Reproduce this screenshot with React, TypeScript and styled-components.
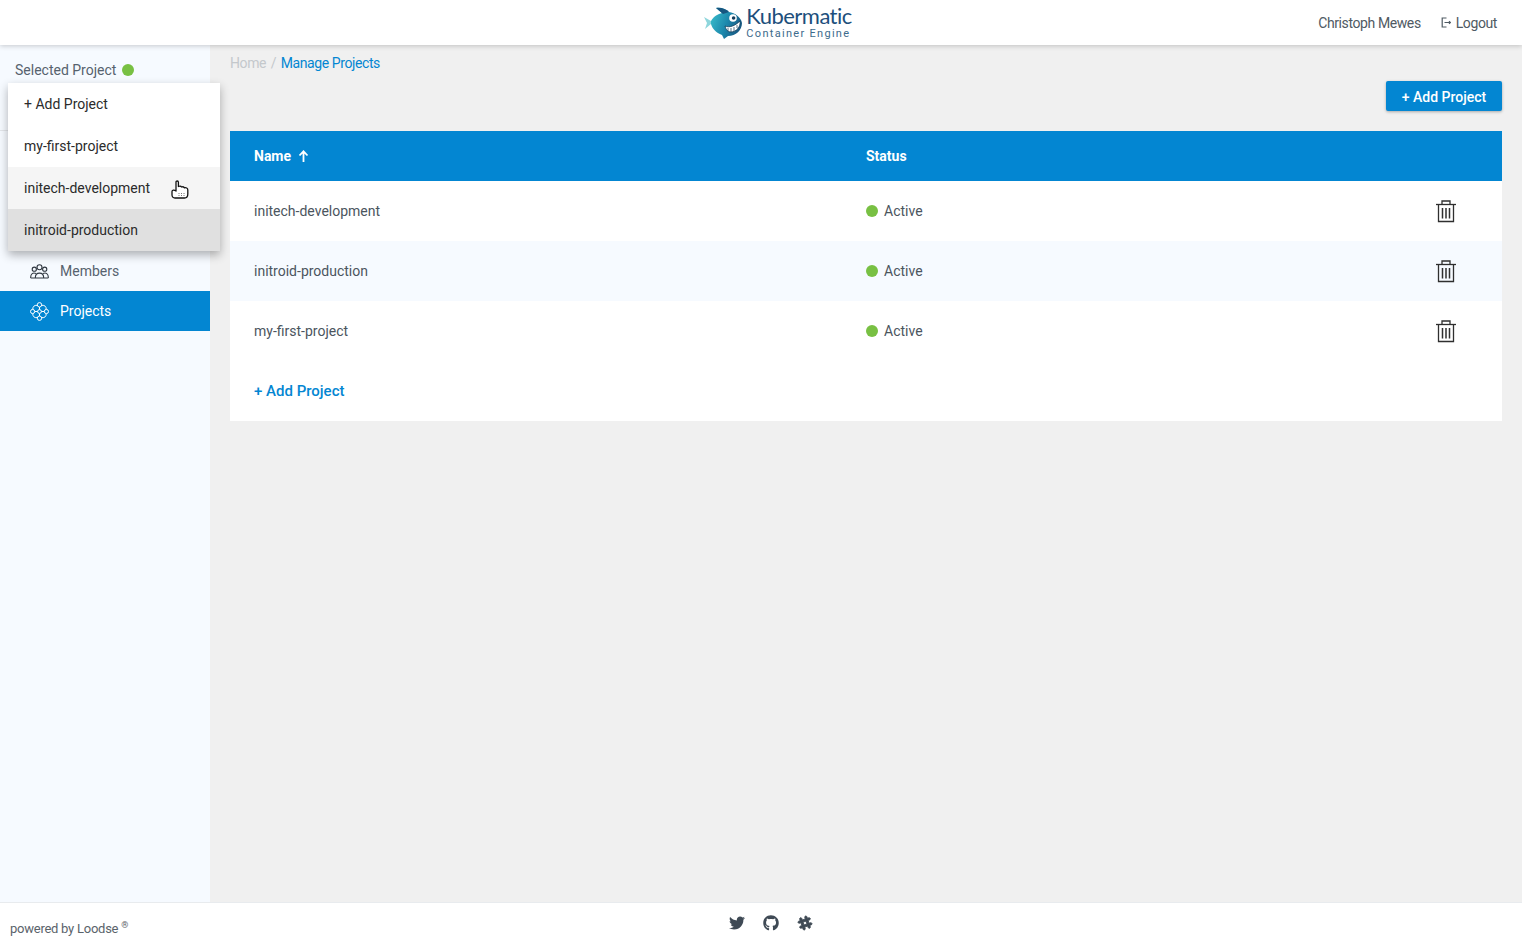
import React from "react";
import styled, { createGlobalStyle } from "styled-components";
import { FaTwitter, FaGithub, FaSlackHash } from "react-icons/fa";

const GlobalStyle = createGlobalStyle`
    html, body {
        margin: 0;
        padding: 0;
        height: 100%;
        background: #f0f0f0;
        font-family: Roboto, "Liberation Sans", sans-serif;
        font-size: 14px;
        color: #3c4650;
    }
`;

const Page = styled.div`
    display: flex;
    flex-direction: column;
    height: 943px;
    overflow: hidden;
`;
const Header = styled.header`
    position: relative;
    z-index: 2;
    flex: 0 0 45px;
    display: grid;
    grid-template-columns: 1fr auto 1fr;
    align-items: start;
    background: #fff;
    box-shadow: 0 1px 5px rgba(0, 0, 0, 0.2);
`;
const Logo = styled.div`
    grid-column: 2;
    display: flex;
    align-items: flex-start;
    gap: 4px;
    margin-left: 34px;
    padding-top: 5px;
`;
const LogoText = styled.div`
    display: flex;
    flex-direction: column;
`;
const LogoTitle = styled.span`
    font-family: Lato, Roboto, sans-serif;
    font-size: 22px;
    line-height: 21px;
    letter-spacing: -0.55px;
    color: #1d4f7c;
`;
const LogoSub = styled.span`
    font-size: 11px;
    line-height: 13px;
    letter-spacing: 1.3px;
    color: #3d6b8c;
    margin-top: 1px;
`;
const UserArea = styled.div`
    grid-column: 3;
    display: flex;
    justify-content: flex-end;
    align-items: center;
    gap: 20px;
    height: 45px;
    padding-right: 25px;
    color: #4f5a63;
    letter-spacing: -0.4px;
`;
const Logout = styled.span`
    display: flex;
    align-items: center;
    gap: 5px;
`;
const Body = styled.div`
    flex: 1;
    display: flex;
    min-height: 0;
`;
const Sidebar = styled.aside`
    position: relative;
    flex: 0 0 210px;
    display: flex;
    flex-direction: column;
    background: #f6faff;
`;
const ProjectSelect = styled.div`
    border-bottom: 1px solid #e3e6ea;
    padding: 17px 15px 0;
    box-sizing: border-box;
    height: 86px;
    display: flex;
    align-items: flex-start;
    gap: 6px;
    line-height: 16px;
    color: #56626e;
`;
const StatusDot = styled.span`
    display: inline-block;
    width: 12px;
    height: 12px;
    border-radius: 50%;
    background: #78c043;
    flex: none;
`;
const SelectDot = styled(StatusDot)`
    margin-top: 2px;
`;
const NavSpacer = styled.div`
    height: 120px;
`;
const NavItem = styled.div<{ $active?: boolean }>`
    height: 40px;
    display: flex;
    align-items: center;
    gap: 11px;
    padding-left: 30px;
    background: ${props => (props.$active ? "#0386d2" : "transparent")};
    color: ${props => (props.$active ? "#fff" : "#56626e")};
`;
const Dropdown = styled.div`
    position: absolute;
    top: 38px;
    left: 8px;
    width: 212px;
    background: #fff;
    box-shadow: 0 4px 9px rgba(0, 0, 0, 0.3);
    z-index: 3;
`;
const DropdownItem = styled.div<{ $bg?: string }>`
    position: relative;
    height: 42px;
    display: flex;
    align-items: center;
    padding-left: 16px;
    color: #2b2b2b;
    background: ${props => props.$bg || "transparent"};
`;
const Cursor = styled.svg`
    position: absolute;
    left: 163px;
    top: 13px;
`;
const Main = styled.main`
    flex: 1;
    padding: 0 20px;
    min-width: 0;
`;
const Breadcrumb = styled.div`
    display: flex;
    gap: 4.6px;
    height: 36px;
    padding-top: 10px;
    box-sizing: border-box;
    line-height: 16px;
    letter-spacing: -0.4px;
`;
const Crumb = styled.span<{ $current?: boolean }>`
    color: ${props => (props.$current ? "#0386d2" : "#c4c8cc")};
`;
const Actions = styled.div`
    display: flex;
    justify-content: flex-end;
    height: 50px;
`;
const PrimaryButton = styled.button`
    width: 116px;
    height: 30px;
    border: 0;
    border-radius: 2px;
    background: #0386d2;
    color: #fff;
    font: 500 14px Roboto, sans-serif;
    box-shadow: 0 1px 3px rgba(0, 0, 0, 0.3);
    padding: 2px 0 0;
`;
const Table = styled.div`
    background: #fff;
`;
const Row = styled.div<{ $alt?: boolean }>`
    display: grid;
    grid-template-columns: 612px 1fr 67px;
    align-items: center;
    height: 60px;
    padding-left: 24px;
    background: ${props => (props.$alt ? "#f6faff" : "transparent")};
    color: #4b555e;
`;
const HeadRow = styled(Row)`
    height: 50px;
    background: #0386d2;
    color: #fff;
    font-weight: 700;
`;
const HeadCell = styled.span`
    display: flex;
    align-items: center;
    gap: 7px;
`;
const StatusCell = styled.span`
    display: flex;
    align-items: center;
    gap: 6px;
`;
const AddRow = styled.div`
    height: 60px;
    display: flex;
    align-items: center;
    padding-left: 24px;
    color: #0386d2;
    font-size: 15px;
    font-weight: 500;
`;
const Footer = styled.footer`
    position: relative;
    z-index: 1;
    flex: 0 0 41px;
    margin-top: -1px;
    display: grid;
    grid-template-columns: 1fr auto 1fr;
    align-items: center;
    background: #fff;
    border-top: 1px solid #e8ebee;
    box-sizing: border-box;
`;
const Powered = styled.span`
    padding: 10px 0 0 10px;
    font-size: 13px;
    letter-spacing: -0.25px;
    color: #5a636b;
`;
const Reg = styled.sup`
    font-size: 9px;
    margin-left: 3px;
`;
const Social = styled.div`
    display: flex;
    gap: 18px;
    font-size: 16px;
    color: #3f4a55;
    margin-left: 20px;
`;
const SlackGlyph = styled(FaSlackHash)`
    stroke: currentColor;
    stroke-width: 28px;
`;

const Fish = () => (
    <svg width="38" height="34" viewBox="0 0 38 34">
        <defs>
            <linearGradient id="fishBody" x1="0" y1="0.2" x2="1" y2="0.6">
                <stop offset="0" stopColor="#38bccb" />
                <stop offset="0.55" stopColor="#1c86ab" />
                <stop offset="1" stopColor="#17557f" />
            </linearGradient>
        </defs>
        <path d="M0 12 L7 16 L7 19 L1 24 L3 18 Z" fill="#8fd6dc" />
        <path d="M7 16 C10 11 14 9 18 8 L12 3 C17 2 22 4 25 7 C31 8 37 12 38 18 C38 25 32 31 24 31 L20 34 L18 30 C12 28 8 23 7 19 Z" fill="url(#fishBody)" />
        <path d="M12 3 C17 2 22 4 25 7 L19 9 Z" fill="#17557f" />
        <path d="M21 21 C25 23 31 21 36 16 C37 22 32 27 27 27 C24 27 22 25 21 21 Z" fill="#fff" stroke="#123d5c" strokeWidth="0.8" />
        <path d="M24 23v3M27 23v4M30 22v4M33 20v3" stroke="#123d5c" strokeWidth="0.7" />
        <circle cx="29" cy="13" r="3.800" fill="#fff" />
        <circle cx="29.600" cy="13" r="1.800" fill="#123d5c" />
    </svg>
);

const LogoutIcon = () => (
    <svg width="10" height="11" viewBox="0 0 10 11" fill="none" stroke="#4f5a63" strokeWidth="1.200">
        <path d="M5.500 1H1.200V10H5.500" />
        <path d="M3.500 5.500H9.300M8 4.200l1.400 1.300L8 6.800" />
    </svg>
);

const MembersIcon = () => (
    <svg width="19" height="15" viewBox="0 0 19 15" fill="none" stroke="#2f3740" strokeWidth="1.100">
        <circle cx="9.500" cy="3.200" r="2.500" />
        <circle cx="4.300" cy="5.200" r="2.100" />
        <circle cx="14.700" cy="5.200" r="2.100" />
        <path d="M5.300 14c0-6.500 8.400-6.500 8.400 0" />
        <path d="M.7 14c-.3-4.500 2.500-5.800 5.300-4.500M18.300 14c.3-4.500-2.500-5.800-5.300-4.500M.7 14h17.600" />
    </svg>
);

const ProjectsIcon = () => (
    <svg width="19" height="19" viewBox="0 0 19 19" fill="none" stroke="#fff" strokeWidth="1">
        <circle cx="9.500" cy="2.800" r="2.200" />
        <circle cx="9.500" cy="16.200" r="2.200" />
        <circle cx="2.600" cy="9.500" r="2.100" />
        <circle cx="16.400" cy="9.500" r="2.100" />
        <circle cx="9.500" cy="9.500" r="1.900" />
        <path d="M7.400 3.300C4 3 2.600 4.800 2.800 7.400M11.600 3.300C15 3 16.400 4.800 16.200 7.400M7.400 15.700C4 16 2.600 14.200 2.800 11.600M11.600 15.700C15 16 16.400 14.200 16.200 11.600M4.700 9.500h2.900M11.400 9.500h2.900M9.500 5v2.600M9.500 11.400V14" />
    </svg>
);

const TrashIcon = () => (
    <svg width="22" height="24" viewBox="0 0 22 24" fill="none" stroke="#2f2f2f" strokeWidth="1.300">
        <path d="M1 5.500H21" />
        <path d="M7 5.500V2H15V5.500" />
        <path d="M3.500 5.500V22.500H18.500V5.500" />
        <path d="M7.500 9V19.500M11 9V19.500M14.500 9V19.500" strokeWidth="1.500" />
    </svg>
);

const HandCursor = () => (
    <Cursor width="18" height="19" viewBox="0 0 18 19">
        <path
            d="M5 9V2.200C5 .6 7.400.6 7.400 2.200V6.500C9 5.800 10 6 10.500 7C12 6.500 13 6.900 13.300 7.800C15 7.400 16.800 8 16.800 10V14C16.800 16.500 15.500 18 13.500 18H4C2 18 1 16.500 1 15V11.500C1 10 3 9.500 5 11Z"
            fill="#fff"
            stroke="#111"
            strokeWidth="1.300"
            strokeLinejoin="round"
        />
        <path d="M8 13v3M10.500 13v3M13 13v3" stroke="#777" strokeWidth="1" strokeDasharray="1 1" />
    </Cursor>
);

const SortArrow = () => (
    <svg width="11" height="12" viewBox="0 0 11 12" fill="none" stroke="#fff" strokeWidth="1.800">
        <path d="M5.500 12V1.500M1.500 5.500L5.500 1.300L9.500 5.500" />
    </svg>
);

const projects = ["initech-development", "initroid-production", "my-first-project"];

const App: React.FC = () => {
    return (
        <Page>
            <GlobalStyle />
            <Header>
                <Logo>
                    <Fish />
                    <LogoText>
                        <LogoTitle>Kubermatic</LogoTitle>
                        <LogoSub>Container Engine</LogoSub>
                    </LogoText>
                </Logo>
                <UserArea>
                    <span>Christoph Mewes</span>
                    <Logout>
                        <LogoutIcon />
                        Logout
                    </Logout>
                </UserArea>
            </Header>
            <Body>
                <Sidebar>
                    <ProjectSelect>
                        Selected Project <SelectDot />
                    </ProjectSelect>
                    <Dropdown>
                        <DropdownItem>+ Add Project</DropdownItem>
                        <DropdownItem>my-first-project</DropdownItem>
                        <DropdownItem $bg="#f5f5f5">
                            initech-development
                            <HandCursor />
                        </DropdownItem>
                        <DropdownItem $bg="#e0e0e0">initroid-production</DropdownItem>
                    </Dropdown>
                    <NavSpacer />
                    <NavItem>
                        <MembersIcon />
                        Members
                    </NavItem>
                    <NavItem $active>
                        <ProjectsIcon />
                        Projects
                    </NavItem>
                </Sidebar>
                <Main>
                    <Breadcrumb>
                        <Crumb>Home</Crumb>
                        <Crumb>/</Crumb>
                        <Crumb $current>Manage Projects</Crumb>
                    </Breadcrumb>
                    <Actions>
                        <PrimaryButton>+ Add Project</PrimaryButton>
                    </Actions>
                    <Table>
                        <HeadRow>
                            <HeadCell>
                                Name <SortArrow />
                            </HeadCell>
                            <span>Status</span>
                        </HeadRow>
                        {projects.map((name, i) => (
                            <Row key={name} $alt={i === 1}>
                                <span>{name}</span>
                                <StatusCell>
                                    <StatusDot />
                                    Active
                                </StatusCell>
                                <TrashIcon />
                            </Row>
                        ))}
                        <AddRow>+ Add Project</AddRow>
                    </Table>
                </Main>
            </Body>
            <Footer>
                <Powered>
                    powered by Loodse<Reg>®</Reg>
                </Powered>
                <Social>
                    <FaTwitter />
                    <FaGithub />
                    <SlackGlyph />
                </Social>
            </Footer>
        </Page>
    );
};

export default App;
